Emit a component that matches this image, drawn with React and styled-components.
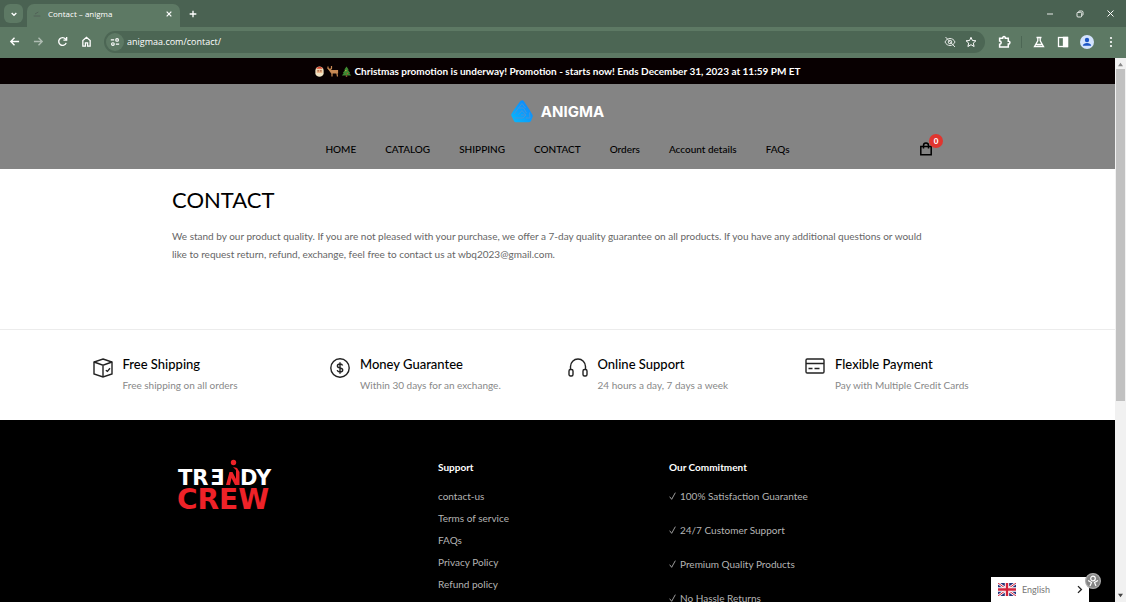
import React from 'react';
import styled, { createGlobalStyle, css } from 'styled-components';

const GlobalStyle = createGlobalStyle`
  * {
    box-sizing: border-box;
  }

  body {
    margin: 0;
    background: #fff;
    font-family: Lato, "Liberation Sans", sans-serif;
    font-size: 10px;
  }

  button, input, select {
    font: inherit;
    color: inherit;
    border: 0;
    padding: 0;
    background: none;
  }

  a {
    color: inherit;
    text-decoration: none;
  }

  svg {
    display: block;
    flex: none;
  }
`;

const Window = styled.div`
  display: flex;
  flex-direction: column;
  height: 100vh;
  overflow: hidden;
`;

/* browser */

const TabStrip = styled.div`
  display: flex;
  align-items: flex-end;
  height: 27px;
  flex: none;
  padding-left: 4px;
  background: #4a6252;
  color: #fff;
  font-family: "Open Sans", "Noto Sans", sans-serif;
`;

const TabSearch = styled.button`
  display: grid;
  place-items: center;
  width: 19px;
  height: 19px;
  margin: 0 4px 4px 0;
  border-radius: 6px;
  background: #5d7964;
`;

const Tab = styled.div`
  display: flex;
  align-items: center;
  gap: 7px;
  width: 153px;
  height: 23px;
  padding: 0 6px 4px;
  border-radius: 7px 7px 0 0;
  background: #5d7964;
  font-size: 8px;
`;

const TabTitle = styled.span`
  flex: 1;
`;

const IconButton = styled.button`
  display: grid;
  place-items: center;
  width: ${(props) => props.$width || 24}px;
  height: ${(props) => props.$height || 24}px;
  opacity: ${(props) => (props.$faded ? 0.5 : 1)};
`;

const WindowButtons = styled.div`
  display: flex;
  align-self: center;
  margin-left: auto;
`;

const Toolbar = styled.div`
  display: flex;
  align-items: center;
  height: 31px;
  flex: none;
  padding: 0 3px 2px 2px;
  background: #5d7964;
  color: #fff;
`;

const AddressBar = styled.div`
  display: flex;
  align-items: center;
  flex: 1;
  height: 22px;
  margin: 0 7px 0 6px;
  padding: 0 4px 0 2px;
  border-radius: 11px;
  background: #4c6654;
`;

const SiteInfo = styled.button`
  display: grid;
  place-items: center;
  width: 18px;
  height: 18px;
  margin-right: 3px;
  border-radius: 9px;
  background: #5d7964;
`;

const AddressInput = styled.input`
  flex: 1;
  min-width: 0;
  outline: none;
  font-family: "Open Sans", "Noto Sans", sans-serif;
  font-size: 9px;
`;

const Divider = styled.span`
  width: 1px;
  height: 12px;
  margin: 0 5px;
  background: #4c6654;
`;

const View = styled.div`
  position: relative;
  display: flex;
  flex: 1;
  min-height: 0;
`;

const Page = styled.div`
  display: flex;
  flex-direction: column;
  flex: 1;
  overflow: hidden;
`;

const Scrollbar = styled.div`
  display: flex;
  flex-direction: column;
  justify-content: space-between;
  align-items: center;
  width: 11px;
  padding: 4px 0;
  background: #f1f1f1;
`;

const Thumb = styled.div`
  flex: 0 0 62%;
  width: 9px;
  margin: 2px 0 auto;
  background: #c1c1c1;
`;

/* page */

const container = css`
  width: 100%;
  max-width: 771px;
  margin: 0 auto;
`;

const Promo = styled.div`
  display: flex;
  justify-content: center;
  align-items: center;
  gap: 2px;
  flex: none;
  height: 26px;
  background: #080001;
  color: #fff;
  font-weight: 700;
`;

const Header = styled.header`
  flex: none;
  background: #848484;
  color: #000;
`;

const Brand = styled.a`
  display: flex;
  justify-content: center;
  align-items: center;
  gap: 8px;
  height: 54px;
  color: #fff;
  font: 700 15px Inter, sans-serif;
`;

const NavRow = styled.div`
  ${container}
  display: grid;
  grid-template-columns: 1fr auto 1fr;
  align-items: center;
  height: 31px;
  padding-bottom: 10px;
`;

const Nav = styled.nav`
  display: flex;
  grid-column: 2;
  gap: 29px;
  font-weight: 500;
`;

const Cart = styled.button`
  position: relative;
  justify-self: end;
  margin-right: 10px;
`;

const Badge = styled.span`
  position: absolute;
  top: -8px;
  right: -10px;
  width: 14px;
  border-radius: 7px;
  background: #e0352f;
  color: #fff;
  font-size: 8px;
  font-weight: 900;
  line-height: 14px;
  text-align: center;
`;

const Content = styled.main`
  ${container}
  height: 160px;
  flex: none;
`;

const Title = styled.h1`
  margin: 16px 0 12px;
  color: #000;
  font-size: 22px;
  font-weight: 400;
  line-height: 30px;
`;

const Text = styled.p`
  margin: 0;
  color: #666;
  line-height: 18px;
`;

const Features = styled.section`
  flex: none;
  height: 91px;
  border-top: 1px solid #ececec;
`;

const FeatureGrid = styled.div`
  display: grid;
  grid-template-columns: repeat(4, 1fr);
  max-width: 950px;
  margin: 0 auto;
  padding-top: 24px;
`;

const Feature = styled.div`
  display: flex;
  gap: 10px;
  padding-left: 10px;

  svg {
    margin-top: 4px;
  }
`;

const FeatureTitle = styled.h2`
  margin: 0;
  color: #000;
  font-size: 13px;
  font-weight: 500;
  line-height: 20px;
`;

const FeatureText = styled.p`
  margin: 0;
  color: #888;
  line-height: 22px;
`;

const Footer = styled.footer`
  flex: 1 0 auto;
  background: #000;
  color: #b4b4b4;
`;

const FooterGrid = styled.div`
  ${container}
  display: grid;
  grid-template-columns: 266fr 231fr 274fr;
  padding-top: 37px;
`;

const FooterTitle = styled.h3`
  margin: 0 0 8px;
  color: #fff;
  font-size: 10px;
  font-weight: 700;
  line-height: 20px;
`;

const FooterList = styled.ul`
  display: grid;
  gap: ${(props) => props.$gap}px;
  margin: 0;
  padding: 0;
  list-style: none;
  line-height: 22px;
`;

const CheckItem = styled.li`
  display: flex;
  align-items: center;
  gap: 3px;
`;

const Language = styled.label`
  position: absolute;
  right: 37px;
  bottom: 0;
  display: flex;
  align-items: center;
  gap: 6px;
  width: 98px;
  height: 25px;
  padding: 0 5px 0 7px;
  background: #fff;
  color: #777;
`;

const LanguageSelect = styled.select`
  flex: 1;
  min-width: 0;
  appearance: none;
  outline: none;
  font-size: 9px;
`;

const Accessibility = styled.button`
  position: absolute;
  right: 25px;
  bottom: 13px;
`;

const NAV_ITEMS = ['HOME', 'CATALOG', 'SHIPPING', 'CONTACT', 'Orders', 'Account details', 'FAQs'];

const SUPPORT_LINKS = ['contact-us', 'Terms of service', 'FAQs', 'Privacy Policy', 'Refund policy'];

const COMMITMENTS = [
  '100% Satisfaction Guarantee',
  '24/7 Customer Support',
  'Premium Quality Products',
  'No Hassle Returns',
];

function Icon({
  size = 12, box = 12, stroke = 1.3, children, ...rest
}) {
  return (
    <svg
      width={size}
      height={size}
      viewBox={`0 0 ${box} ${box}`}
      fill="none"
      stroke="currentColor"
      strokeWidth={stroke}
      aria-hidden="true"
      {...rest}
    >
      {children}
    </svg>
  );
}

const FEATURES = [
  {
    title: 'Free Shipping',
    text: 'Free shipping on all orders',
    icon: (
      <>
        <path d="M10 1 19 4v12l-9 3-9-3V4z" />
        <path d="m1 4 9 3.2L19 4M10 7.2V19M12.8 12.2l1.6 1.2 2.6-3.2" />
      </>
    ),
  },
  {
    title: 'Money Guarantee',
    text: 'Within 30 days for an exchange.',
    icon: (
      <>
        <circle cx="10" cy="10" r="9.2" />
        <path d="M12.6 7.5C12.2 6.4 11.3 6 10 6c-1.5 0-2.6.7-2.6 1.9 0 2.9 5.3 1.3 5.3 4.2 0 1.2-1.1 1.9-2.7 1.9-1.4 0-2.5-.6-2.8-1.8M10 4.3v11.4" />
      </>
    ),
  },
  {
    title: 'Online Support',
    text: '24 hours a day, 7 days a week',
    icon: (
      <>
        <path d="M2.5 12V8.5a7.5 7.5 0 0 1 15 0V12" />
        <rect x="1" y="11.5" width="4" height="6.5" rx="1.5" />
        <rect x="15" y="11.5" width="4" height="6.5" rx="1.5" />
      </>
    ),
  },
  {
    title: 'Flexible Payment',
    text: 'Pay with Multiple Credit Cards',
    icon: (
      <>
        <rect x="1" y="1" width="18" height="14" rx="1.2" />
        <path d="M1 5.5h18M3.5 10.5h4M9.5 10.5h5" />
      </>
    ),
  },
];

function BrowserTop() {
  return (
    <>
      <TabStrip>
        <TabSearch aria-label="Search tabs">
          <Icon size={8}><path d="m2.5 4.5 3.5 3.5 3.5-3.5" strokeWidth="2" /></Icon>
        </TabSearch>
        <Tab>
          <Icon size={8} stroke={1} color="#4c5652"><path d="M1 9h10M3 6l5-3" /></Icon>
          <TabTitle>Contact – anigma</TabTitle>
          <IconButton $width={10} $height={16} aria-label="Close tab">
            <Icon size={8}><path d="m2.5 2.5 7 7m0-7-7 7" strokeWidth="1.8" /></Icon>
          </IconButton>
        </Tab>
        <IconButton $width={26} $height={27} aria-label="New tab">
          <Icon size={8}><path d="M6 1v10M1 6h10" strokeWidth="2" /></Icon>
        </IconButton>
        <WindowButtons>
          <IconButton $width={30} aria-label="Minimize">
            <Icon size={8}><path d="M1.5 6h9" /></Icon>
          </IconButton>
          <IconButton $width={30} aria-label="Restore">
            <Icon size={8}>
              <rect x="1.5" y="3.5" width="7" height="7" rx="1.5" />
              <path d="M4 3.5V2.7C4 2 4.5 1.5 5.2 1.5h3.3a2 2 0 0 1 2 2v3.3c0 .7-.5 1.2-1.2 1.2" />
            </Icon>
          </IconButton>
          <IconButton $width={31} aria-label="Close">
            <Icon size={9}><path d="m2 2 8 8m0-8-8 8" /></Icon>
          </IconButton>
        </WindowButtons>
      </TabStrip>
      <Toolbar>
        <IconButton aria-label="Back"><Icon size={11} stroke={1.5}><path d="M11 6H2m4-4L2 6l4 4" /></Icon></IconButton>
        <IconButton $faded aria-label="Forward"><Icon size={11} stroke={1.5}><path d="M1 6h9M6 2l4 4-4 4" /></Icon></IconButton>
        <IconButton aria-label="Reload">
          <Icon size={11} stroke={1.5}>
            <path d="M10 7.5A4.2 4.2 0 1 1 9.3 3.3L10.5 4.5" />
            <path d="M10.5 1v3.5H7" />
          </Icon>
        </IconButton>
        <IconButton aria-label="Home">
          <Icon size={11} stroke={1.4}><path d="M2 5v6h2.8V7.5h2.4V11H10V5L6 1.5z" /></Icon>
        </IconButton>
        <AddressBar>
          <SiteInfo aria-label="Site information">
            <Icon size={10} stroke={1.4}>
              <path d="M1 3.5h4M7 8.5h4" />
              <circle cx="8.5" cy="3.5" r="1.6" />
              <circle cx="3.5" cy="8.5" r="1.6" />
            </Icon>
          </SiteInfo>
          <AddressInput aria-label="Address" defaultValue="anigmaa.com/contact/" />
          <IconButton $width={21} aria-label="Third-party cookies blocked">
            <Icon size={12} stroke={1} opacity="0.85">
              <path d="M1 6c2-4.7 8-4.7 10 0-2 4.7-8 4.7-10 0zM1.5 1l9.5 10" />
              <circle cx="6" cy="6" r="1.8" />
            </Icon>
          </IconButton>
          <IconButton $width={21} aria-label="Bookmark">
            <Icon size={12} stroke={1}>
              <path d="m6 1.3 1.4 3.2 3.5.3-2.6 2.3.8 3.4L6 8.7l-3.1 1.8.8-3.4-2.6-2.3 3.5-.3z" />
            </Icon>
          </IconButton>
        </AddressBar>
        <IconButton aria-label="Extensions">
          <Icon size={13} stroke={1.4}>
            <path d="M1.5 3h2.8c-.2-2 2.7-2 2.5 0H9.5v2.7c2-.2 2 2.8 0 2.6V11h-8V8.5c1.9 0 1.9-3 0-3z" />
          </Icon>
        </IconButton>
        <Divider />
        <IconButton aria-label="Labs">
          <Icon><path d="M3.5 1.5h5M4.8 1.5v3.3L1.5 10.5h9L7.2 4.8V1.5M3.5 8.5h5" /></Icon>
        </IconButton>
        <IconButton aria-label="Side panel">
          <Icon>
            <rect x="1.5" y="1.5" width="9" height="9" />
            <path d="M6.5 1.5h4v9h-4z" fill="currentColor" />
          </Icon>
        </IconButton>
        <IconButton aria-label="Profile">
          <Icon size={14} box={14} stroke={0}>
            <circle cx="7" cy="7" r="7" fill="#d3e3fd" />
            <circle cx="7" cy="5" r="2.2" fill="#1b55c4" />
            <path d="M2.8 10.8c.4-3.7 8-3.7 8.4 0z" fill="#1b55c4" />
          </Icon>
        </IconButton>
        <IconButton aria-label="Menu">
          <Icon stroke={0} fill="currentColor">
            <circle cx="6" cy="2" r="1.1" />
            <circle cx="6" cy="6" r="1.1" />
            <circle cx="6" cy="10" r="1.1" />
          </Icon>
        </IconButton>
      </Toolbar>
    </>
  );
}

function PromoIcons() {
  return (
    <>
      <Icon size={11} stroke={0}>
        <path d="M1.5 5c0-6 9-6 9 0v3c0 5-9 5-9 0z" fill="#f0e3c4" />
        <path d="M2.5 3c1-3 6-3 7 0z" fill="#d8432b" />
        <path d="M3 4h6v3.5H3z" fill="#f0b184" />
        <circle cx="4.5" cy="5.3" r=".6" fill="#402a20" />
        <circle cx="7.5" cy="5.3" r=".6" fill="#402a20" />
      </Icon>
      <Icon size={12} stroke={1.2} color="#c98a55">
        <path d="M1 1.5v2l2 1M4.5 1v2.5L3 4.5" />
        <path d="M2 4.5 5 5.5h5.5V8H4.5z" fill="#c98a55" />
        <path d="M5 8v3.5M9.8 7.5l.7 4" />
      </Icon>
      <Icon size={11} stroke={0}>
        <path d="M6 .5 8.5 4h-1L10 7.5H9l2 2.8H1L3 7.5H2L4.5 4h-1z" fill="#3f8a32" />
        <path d="M5.2 10h1.6v2H5.2z" fill="#835034" />
        <circle cx="5.3" cy="5" r=".7" fill="#e4c443" />
        <circle cx="7" cy="8" r=".7" fill="#d8432b" />
      </Icon>
    </>
  );
}

function AnigmaMark() {
  return (
    <svg width="22" height="24" viewBox="0 0 22 24" aria-hidden="true">
      <defs>
        <linearGradient id="anigma" x1="0" y1="1" x2="1" y2="0">
          <stop offset="0" stopColor="#08b4fb" />
          <stop offset="1" stopColor="#0f86fb" />
        </linearGradient>
      </defs>
      <path
        d="M11 3.5 5.5 11l-3 5 2.500 5h13l1.500-4-3.500-6z"
        fill="url(#anigma)"
        stroke="url(#anigma)"
        strokeWidth="4.5"
        strokeLinejoin="round"
      />
      <path
        d="M7.5 9 11 4.5 14.5 9M3 15l4.5-6h5l3 5M7.5 15.5l3.5-4 4 4.5h-5M4 19h8l3-3M18.5 13.5l.5 5.5h-4"
        fill="none"
        stroke="#4d93d6"
        strokeWidth=".9"
      />
    </svg>
  );
}

function TrendyCrewLogo() {
  return (
    <svg width="106" height="62" viewBox="0 0 106 62" role="img" aria-label="Trendy Crew">
      <g fontFamily="DejaVu Sans, sans-serif" fontWeight="700" fontSize="21">
        <text x="6" y="28" fill="#fff">TR</text>
        <text x="38" y="28" fill="#fff">Ǝ</text>
        <text x="68" y="28" fill="#fff">DY</text>
        <text x="5" y="52" fill="#ee2228" fontSize="28">CREW</text>
      </g>
      <circle cx="61.5" cy="5.5" r="2.7" fill="#ee2228" />
      <path d="M54 28 57.500 15h3l3.500 7v-9l-3-3 4 1 2.500 4v13h-4.500l-3.500-7-1.500 7z" fill="#ee2228" />
    </svg>
  );
}

function UnionJack() {
  return (
    <svg width="18" height="13" viewBox="0 0 18 13" aria-hidden="true">
      <path d="M0 0h18v13H0z" fill="#25337a" />
      <path d="m0 0 18 13M18 0 0 13" stroke="#fff" strokeWidth="2.6" />
      <path d="m0 0 18 13M18 0 0 13" stroke="#d2233c" strokeWidth="1" />
      <path d="M9 0v13M0 6.5h18" stroke="#fff" strokeWidth="4.4" />
      <path d="M9 0v13M0 6.5h18" stroke="#d2233c" strokeWidth="2.4" />
    </svg>
  );
}

export default function App() {
  return (
    <Window>
      <GlobalStyle />
      <BrowserTop />
      <View>
        <Page>
          <Promo>
            <PromoIcons />
            <span>
              Christmas promotion is underway! Promotion - starts now! Ends December 31, 2023 at 11:59 PM ET
            </span>
          </Promo>

          <Header>
            <Brand href="#home">
              <AnigmaMark />
              <span>ANIGMA</span>
            </Brand>
            <NavRow>
              <Nav>
                {NAV_ITEMS.map((item) => <a key={item} href="#nav">{item}</a>)}
              </Nav>
              <Cart aria-label="Cart">
                <Icon size={14} box={14} stroke={1.5}>
                  <path d="M1.8 4.5h10.4v8.2H1.8zM4.5 6.5V3.5a2.5 2.5 0 0 1 5 0v3" />
                </Icon>
                <Badge>0</Badge>
              </Cart>
            </NavRow>
          </Header>

          <Content>
            <Title>CONTACT</Title>
            <Text>
              We stand by our product quality. If you are not pleased with your purchase, we offer a
              7-day quality guarantee on all products. If you have any additional questions or would
              <br />
              like to request return, refund, exchange, feel free to contact us at wbq2023@gmail.com.
            </Text>
          </Content>

          <Features>
            <FeatureGrid>
              {FEATURES.map((feature) => (
                <Feature key={feature.title}>
                  <Icon size={20} box={20} stroke={1.4} color="#222">{feature.icon}</Icon>
                  <div>
                    <FeatureTitle>{feature.title}</FeatureTitle>
                    <FeatureText>{feature.text}</FeatureText>
                  </div>
                </Feature>
              ))}
            </FeatureGrid>
          </Features>

          <Footer>
            <FooterGrid>
              <TrendyCrewLogo />
              <div>
                <FooterTitle>Support</FooterTitle>
                <FooterList $gap={0}>
                  {SUPPORT_LINKS.map((item) => <li key={item}><a href="#support">{item}</a></li>)}
                </FooterList>
              </div>
              <div>
                <FooterTitle>Our Commitment</FooterTitle>
                <FooterList $gap={12}>
                  {COMMITMENTS.map((item) => (
                    <CheckItem key={item}>
                      <Icon size={8} stroke={1.3}><path d="m1 7 3 4L9.5 1" /></Icon>
                      {item}
                    </CheckItem>
                  ))}
                </FooterList>
              </div>
            </FooterGrid>
          </Footer>
        </Page>

        <Scrollbar>
          <Icon size={5} box={6} stroke={0}><path d="M0 5h6L3 1z" fill="#888" /></Icon>
          <Thumb />
          <Icon size={5} box={6} stroke={0}><path d="M0 1h6L3 5z" fill="#444" /></Icon>
        </Scrollbar>

        <Language>
          <UnionJack />
          <LanguageSelect aria-label="Language" defaultValue="English">
            <option>English</option>
          </LanguageSelect>
          <Icon size={9} stroke={1.8} color="#222"><path d="m4 1.5 4.5 4.5L4 10.5" /></Icon>
        </Language>
        <Accessibility aria-label="Accessibility">
          <Icon size={16} box={16} stroke={1.2} color="#fff">
            <circle cx="8" cy="8" r="7.4" fill="#858585" stroke="#aaa" />
            <circle cx="8" cy="5.5" r="2.3" />
            <path d="M3 7.5 6.5 9.5 5 13M13 7.5 9.5 9.5 11 13" />
          </Icon>
        </Accessibility>
      </View>
    </Window>
  );
}
